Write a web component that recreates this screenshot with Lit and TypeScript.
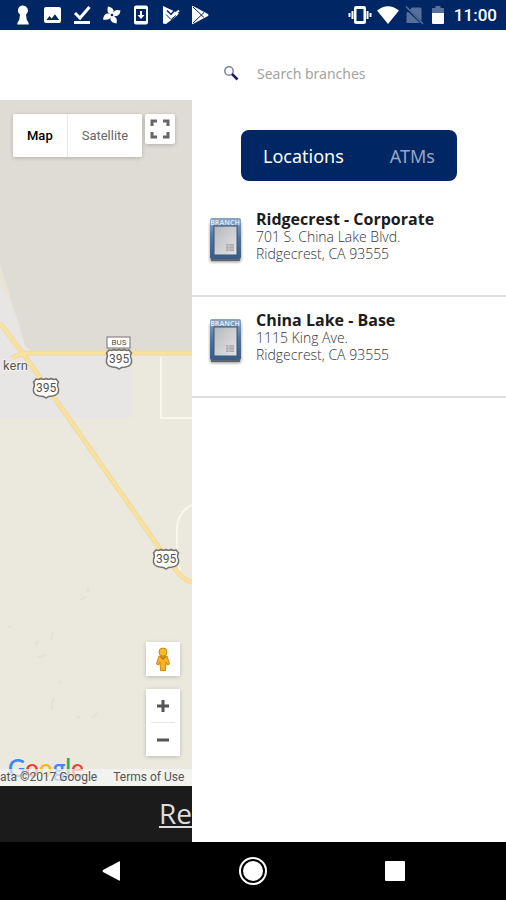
import { LitElement, html, css, svg } from "lit";
import { customElement, property, state } from "lit/decorators.js";
import { classMap } from "lit/directives/class-map.js";

interface Branch {
  name: string;
  street: string;
  city: string;
}

const BRANCHES: Branch[] = [
  { name: "Ridgecrest - Corporate", street: "701 S. China Lake Blvd.", city: "Ridgecrest, CA 93555" },
  { name: "China Lake - Base", street: "1115 King Ave.", city: "Ridgecrest, CA 93555" },
];

@customElement("status-bar")
class StatusBar extends LitElement {
  static styles = css`
    :host {
      display: flex;
      justify-content: space-between;
      align-items: center;
      height: 30px;
      padding: 0 9px 0 13px;
      background: #002663;
      color: #fff;
      font: 500 17px/30px Roboto, sans-serif;
    }
    .notices {
      display: flex;
      justify-content: space-between;
      width: 197px;
    }
    .system {
      display: flex;
      align-items: center;
      gap: 4px;
    }
    svg {
      display: block;
      fill: #fff;
    }
    .line {
      fill: none;
      stroke: #fff;
    }
    .navy {
      fill: #002663;
    }
    .cut {
      fill: none;
      stroke: #002663;
    }
    .dim {
      fill: #56709c;
    }
    .time {
      padding-left: 2px;
    }
  `;

  render() {
    return html`
      <div class="notices">
        <svg width="20" height="20" viewBox="0 0 20 20"><path d="M10 0.500a5 5 0 0 1 4 8l-1 1 .8 5.500q2 1.500 2 4.500h-11.600q0-3 2-4.500l.8-5.500-1-1a5 5 0 0 1 3-8z" /></svg>
        <svg width="20" height="20" viewBox="0 0 20 20">
          <rect x="1" y="2" width="17" height="16" rx="2" />
          <path class="navy" d="M3.500 15l3-4 2.200 2.500 3.200-4.200 4.300 5.700z" />
        </svg>
        <svg width="20" height="20" viewBox="0 0 20 20">
          <path class="line" stroke-width="3" d="M3 8l5 5 9.500-11" />
          <rect x="2" y="16" width="16" height="3" />
        </svg>
        <svg width="20" height="20" viewBox="0 0 20 20">
          <path d="M9 9.500q-5-2-3-8 4 .500 5.500 3.500v4z" />
          <path d="M10.500 9q2-5.500 8-3.500-.5 4-3.500 5.500h-4z" />
          <path d="M11 10.500q5 2 3.500 8-4.500-.5-6-3.500v-4z" />
          <path d="M9.500 11q-2 5-8.500 3.500.5-4.500 3.500-6h4z" />
          <circle class="navy" cx="10" cy="10" r="1.300" />
        </svg>
        <svg width="20" height="20" viewBox="0 0 20 20">
          <rect x="3" y="0.500" width="14" height="19" rx="2" />
          <rect class="navy" x="5" y="4" width="10" height="12" />
          <path d="M9 6h2v4h2.500l-3.500 4-3.500-4h2.500z" />
        </svg>
        <svg width="20" height="20" viewBox="0 0 20 20">
          <path d="M2 1l16 7.500-3 3-10 7.500-3-.5z" />
          <path class="cut" stroke-width="1.500" d="M6 5.500l4 4 6-7" />
          <path class="line" stroke-width="2" d="M6 8.500l4 4 8-7" />
          <path class="cut" stroke-width="1" d="M5 9.500l5 5 5-4" />
        </svg>
        <svg width="20" height="20" viewBox="0 0 20 20">
          <path d="M2 1.500q0-1 1-.500l15 8q1 1 0 2l-15 8q-1 .500-1-.500z" />
          <path class="cut" stroke-width="1" d="M3 2l11 10.500M3 18l11-10.500" />
        </svg>
      </div>
      <div class="system">
        <svg width="24" height="20" viewBox="0 0 24 20">
          <path class="line" stroke-width="2" d="M1.500 8v4M4.500 6v8M22.500 8v4M19.500 6v8" />
          <rect x="6" y="1" width="12" height="18" rx="2" />
          <rect class="navy" x="8.500" y="4" width="7" height="12" />
        </svg>
        <svg width="24" height="20" viewBox="0 0 24 20"><path d="M1 5.500q11-8.500 22 0l-11 13.500z" /></svg>
        <svg width="20" height="20" viewBox="0 0 20 20">
          <path class="dim" d="M8 2.500h8q1.500 0 1.500 1.500v14h-15v-10z" />
          <path class="cut" stroke-width="2.500" d="M1 2l18 17" />
          <path fill="none" stroke="#56709c" stroke-width="1.500" d="M2 1.500l17 17.500" />
        </svg>
        <svg width="20" height="20" viewBox="0 0 20 20">
          <path class="dim" d="M4 3h3.500v-2h5v2h3.500v5h-12z" />
          <path d="M4 8h12v10q0 1-1 1h-10q-1 0-1-1z" />
        </svg>
        <span class="time">11:00</span>
      </div>
    `;
  }
}

const shield = (x: number, y: number) => svg`
  <g transform="translate(${x} ${y})">
    <path class="shield" d="M-10 -9q2.500 1 5-.5 2.500 1.500 5 0 2.500 1.500 5 0 2.500 1.500 5 .5l2.500 3q-2 3 0 6.500 1 6.500-6 7.500-4.500 0-6.500 2-2-2-6.500-2-7-1-6-7.500 2-3.500 0-6.500z" />
    <text class="route" y="4">395</text>
  </g>
`;

@customElement("branch-map")
class BranchMap extends LitElement {
  static styles = css`
    :host {
      position: relative;
      display: flex;
      flex-direction: column;
      justify-content: space-between;
      overflow: hidden;
      background: #ebe9de;
      font: 13px/16px Roboto, sans-serif;
    }
    .canvas {
      position: absolute;
      inset: 0;
      width: 100%;
      height: 100%;
    }
    .shield {
      fill: #fff;
      stroke: #77736c;
      stroke-width: 1.500;
    }
    .route {
      font: 12px Roboto, sans-serif;
      fill: #55524d;
      text-anchor: middle;
    }
    .bus {
      font: 8px Roboto, sans-serif;
      fill: #55524d;
      text-anchor: middle;
    }
    .town {
      font: 13px Roboto, sans-serif;
      fill: #5d5953;
      stroke: #f5f3f0;
      stroke-width: 2;
      paint-order: stroke;
      text-anchor: end;
    }
    .top,
    .side {
      position: relative;
      display: flex;
    }
    .top {
      gap: 3px;
      padding: 14px 12px 0 13px;
      align-items: flex-start;
    }
    button {
      margin: 0;
      padding: 0;
      border: 0;
      background: #fff;
      color: #666;
      font: inherit;
      display: grid;
      place-items: center;
    }
    .types,
    .full,
    .card {
      background: #fff;
      border-radius: 2px;
      box-shadow: 0 1px 4px rgba(0, 0, 0, 0.2);
    }
    .types {
      display: flex;
      overflow: hidden;
    }
    .types button {
      height: 43px;
      padding: 0 14px;
    }
    .types button + button {
      border-left: 1px solid #e8e8e8;
    }
    .types .current {
      color: #000;
      font-weight: 500;
    }
    .full {
      width: 30px;
      height: 30px;
    }
    .bottom {
      position: relative;
    }
    .side {
      flex-direction: column;
      align-items: flex-end;
      gap: 13px;
      padding: 0 12px;
    }
    .card {
      width: 34px;
    }
    .card button {
      width: 34px;
      height: 34px;
    }
    .zoom button {
      height: 33px;
    }
    .zoom hr {
      margin: 0 5px;
      border: 0;
      height: 1px;
      background: #e6e6e6;
    }
    .foot {
      position: relative;
      height: 30px;
      display: flex;
      align-items: flex-end;
    }
    .logo {
      position: absolute;
      left: 8px;
      bottom: 4px;
      font: 600 24px/28px Lato, sans-serif;
      text-decoration: none;
    }
    .blue {
      color: #4285f4;
    }
    .red {
      color: #ea4335;
    }
    .gold {
      color: #fbbc05;
    }
    .green {
      color: #34a853;
    }
    .legal {
      position: relative;
      display: flex;
      flex: 1;
      justify-content: flex-end;
      gap: 16px;
      padding-right: 8px;
      background: rgba(245, 245, 245, 0.7);
      color: #555;
      font-size: 12px;
      line-height: 17px;
      white-space: nowrap;
    }
    .legal a {
      color: inherit;
      text-decoration: none;
    }
  `;

  render() {
    return html`
      <svg class="canvas" viewBox="0 0 192 686" preserveAspectRatio="xMinYMin slice" aria-hidden="true">
        <rect width="192" height="686" fill="#ebe9de" />
        <rect width="192" height="253" fill="#dfdcd5" />
        <path d="M0 165L8 190 25 245 33 253H132V318H0z" fill="#e8e6e4" />
        <path d="M0 165L8 190 12 205 0 185z" fill="#e9e4d6" />
        <path d="M161 257V318H192M192 405Q177 412 177 430V455L180 472" fill="none" stroke="#f8f7ee" stroke-width="2" />
        <g fill="none" stroke="#dfddd2" stroke-width="2" opacity=".6">
          <path d="M38 557l8-2M62 583l-3-2M54 598q-4 8-1 12M76 618l4-2M92 618l6-5M35 545l4-4M50 540q4-4 2-8M80 500l6-3M88 492v-4M8 527h4" />
        </g>
        <g fill="none" stroke="#eed9a4" stroke-width="5">
          <path d="M12 258Q20 253 34 253H192" />
          <path d="M0 223L24 255 70 320 158 446 176 470Q184 481 192 482" />
        </g>
        <g fill="none" stroke="#fbe29a" stroke-width="3">
          <path d="M12 258Q20 253 34 253H192" />
          <path d="M0 223L24 255 70 320 158 446 176 470Q184 481 192 482" />
        </g>
        <rect x="107" y="237" width="23" height="11" fill="#fff" stroke="#77736c" />
        <text class="bus" x="119" y="245">BUS</text>
        ${shield(119, 259)} ${shield(46, 288)} ${shield(166, 459)}
        <text class="town" x="28" y="270">kern</text>
      </svg>

      <div class="top">
        <div class="types">
          <button class="current">Map</button>
          <button>Satellite</button>
        </div>
        <button class="full" aria-label="Full screen">
          <svg width="20" height="20" viewBox="0 0 20 20" fill="none" stroke="#666" stroke-width="3">
            <path d="M2 7V2H7M13 2H18V7M18 13V18H13M7 18H2V13" />
          </svg>
        </button>
      </div>

      <div class="bottom">
        <div class="side">
          <div class="card">
            <button aria-label="Street View">
              <svg width="16" height="26" viewBox="0 0 16 26">
                <path d="M4 10h8l2.500 8-2 1-1.500-3-.5 8.500h-5l-.500-8.500-1.500 3-2-1z" fill="#f9b021" stroke="#c98713" />
                <circle cx="8" cy="6" r="4" fill="#fbb828" stroke="#c98713" />
                <path d="M5.500 10.500L8 13l2.500-2.500" fill="none" stroke="#b8740c" stroke-width="1.500" />
              </svg>
            </button>
          </div>
          <div class="card zoom">
            <button aria-label="Zoom in">
              <svg width="14" height="14" viewBox="0 0 14 14"><path d="M7 1V13M1 7H13" stroke="#555" stroke-width="3" /></svg>
            </button>
            <hr />
            <button aria-label="Zoom out">
              <svg width="14" height="14" viewBox="0 0 14 14"><path d="M1 7H13" stroke="#555" stroke-width="3" /></svg>
            </button>
          </div>
        </div>
        <div class="foot">
          <a class="logo" href="#maps"><span class="blue">G</span><span class="red">o</span><span class="gold">o</span><span class="blue">g</span><span class="green">l</span><span class="red">e</span></a>
          <div class="legal"><span>ata ©2017 Google</span><a href="#terms">Terms of Use</a></div>
        </div>
      </div>
    `;
  }
}

@customElement("branch-row")
class BranchRow extends LitElement {
  @property({ attribute: false }) branch!: Branch;

  static styles = css`
    :host {
      display: flex;
      gap: 8px;
      min-height: 85px;
      padding: 14px 16px 0;
      border-bottom: 2px solid #dedede;
      color: #333;
      font: 300 14px/17px "Open Sans", sans-serif;
    }
    svg {
      flex: none;
      margin-top: 6px;
    }
    h2 {
      margin: 0;
      color: #1c1c1c;
      font-size: 16px;
      font-weight: 700;
      line-height: 18px;
    }
    address {
      font-style: normal;
    }
    .plate {
      font: 700 7px "Open Sans", sans-serif;
      fill: #dbe6f2;
      text-anchor: middle;
    }
  `;

  render() {
    return html`
      <svg width="40" height="54" viewBox="0 0 40 54" aria-hidden="true">
        <defs>
          <linearGradient id="frame" x2="0" y2="1">
            <stop offset="0" stop-color="#8ba6c4" />
            <stop offset=".5" stop-color="#4f719b" />
            <stop offset="1" stop-color="#3b5b87" />
          </linearGradient>
          <linearGradient id="pane" x2="1" y2="1">
            <stop offset="0" stop-color="#b5b8bb" />
            <stop offset="1" stop-color="#e4e4e4" />
          </linearGradient>
          <filter id="soft"><feGaussianBlur stdDeviation="1.500" /></filter>
        </defs>
        <rect x="2" y="6" width="31" height="40" rx="2" fill="#777" opacity=".8" filter="url(#soft)" />
        <rect x="2" y="2" width="31" height="41" rx="2" fill="url(#frame)" />
        <text class="plate" x="17" y="9">BRANCH</text>
        <rect x="6" y="10" width="23" height="29" fill="url(#pane)" stroke="#345581" />
        <rect x="18" y="28" width="8" height="7" fill="#a9abad" />
        <path d="M18 30h8M18 33h8M21 28v7" stroke="#c6c8ca" />
        <path d="M3 44h29" stroke="#5c6570" stroke-width="2" />
      </svg>
      <div>
        <h2>${this.branch.name}</h2>
        <address>${this.branch.street}<br />${this.branch.city}</address>
      </div>
    `;
  }
}

@customElement("app-root")
class AppRoot extends LitElement {
  @state() private tab = "Locations";

  static styles = css`
    :host {
      display: flex;
      flex-direction: column;
      min-height: 100vh;
      background: #fff;
      font-family: "Open Sans", sans-serif;
    }
    main {
      flex: 1;
      display: grid;
      grid-template-columns: 192fr 314fr;
    }
    .left {
      min-width: 0;
      display: flex;
      flex-direction: column;
      padding-top: 70px;
    }
    branch-map {
      flex: 1;
    }
    .strip {
      height: 56px;
      overflow: hidden;
      background: #1b1b1b;
      text-align: right;
    }
    .strip a {
      color: #ddd;
      font-size: 28px;
      line-height: 54px;
    }
    .right {
      min-width: 0;
      background: #fff;
    }
    .search {
      display: flex;
      align-items: center;
      gap: 18px;
      height: 88px;
      padding: 0 16px 0 31px;
    }
    .search input {
      flex: 1;
      min-width: 0;
      padding: 0;
      border: 0;
      outline: 0;
      background: none;
      color: #333;
      font: 14px/20px "Noto Sans", sans-serif;
    }
    .search input::placeholder {
      color: #a3a3a3;
    }
    .tabs {
      display: flex;
      justify-content: space-between;
      width: 216px;
      height: 51px;
      box-sizing: border-box;
      margin: 12px auto 15px;
      padding: 0 22px;
      border-radius: 8px;
      background: #002663;
    }
    .tabs button {
      padding: 0;
      border: 0;
      background: none;
      color: #98a4c4;
      font: 18px/24px "Noto Sans", sans-serif;
    }
    .tabs .on {
      color: #fff;
    }
    nav {
      display: flex;
      justify-content: center;
      gap: 110px;
      height: 58px;
      background: #000;
    }
    nav button {
      display: grid;
      place-items: center;
      width: 32px;
      padding: 0;
      border: 0;
      background: none;
    }
  `;

  render() {
    return html`
      <status-bar></status-bar>
      <main>
        <div class="left">
          <branch-map></branch-map>
          <div class="strip"><a href="#re">Re</a></div>
        </div>
        <div class="right">
          <label class="search">
            <svg width="16" height="16" viewBox="0 0 16 16" fill="none" aria-hidden="true">
              <circle cx="6" cy="5" r="4.200" stroke="#7d83a0" stroke-width="1.500" />
              <path d="M9 8L14.500 13.500" stroke="#1d1b66" stroke-width="2.500" />
            </svg>
            <input type="search" placeholder="Search branches" aria-label="Search branches" />
          </label>
          <div class="tabs">
            ${["Locations", "ATMs"].map(
              (name) => html`<button class=${classMap({ on: this.tab === name })} @click=${() => (this.tab = name)}>${name}</button>`
            )}
          </div>
          ${BRANCHES.map((branch) => html`<branch-row .branch=${branch}></branch-row>`)}
        </div>
      </main>
      <nav>
        <button aria-label="Back">
          <svg width="20" height="22" viewBox="0 0 20 22"><path d="M19 2v18q0 1-1 .500l-16-8.500q-1-1 0-2l16-8.500q1-.500 1 .500z" fill="#fff" /></svg>
        </button>
        <button aria-label="Home">
          <svg width="28" height="28" viewBox="0 0 28 28">
            <circle cx="14" cy="14" r="13" fill="none" stroke="#fff" stroke-width="2" />
            <circle cx="14" cy="14" r="10" fill="#fff" />
          </svg>
        </button>
        <button aria-label="Recent apps">
          <svg width="20" height="20" viewBox="0 0 20 20"><rect width="20" height="20" rx="1" fill="#fff" /></svg>
        </button>
      </nav>
    `;
  }
}
